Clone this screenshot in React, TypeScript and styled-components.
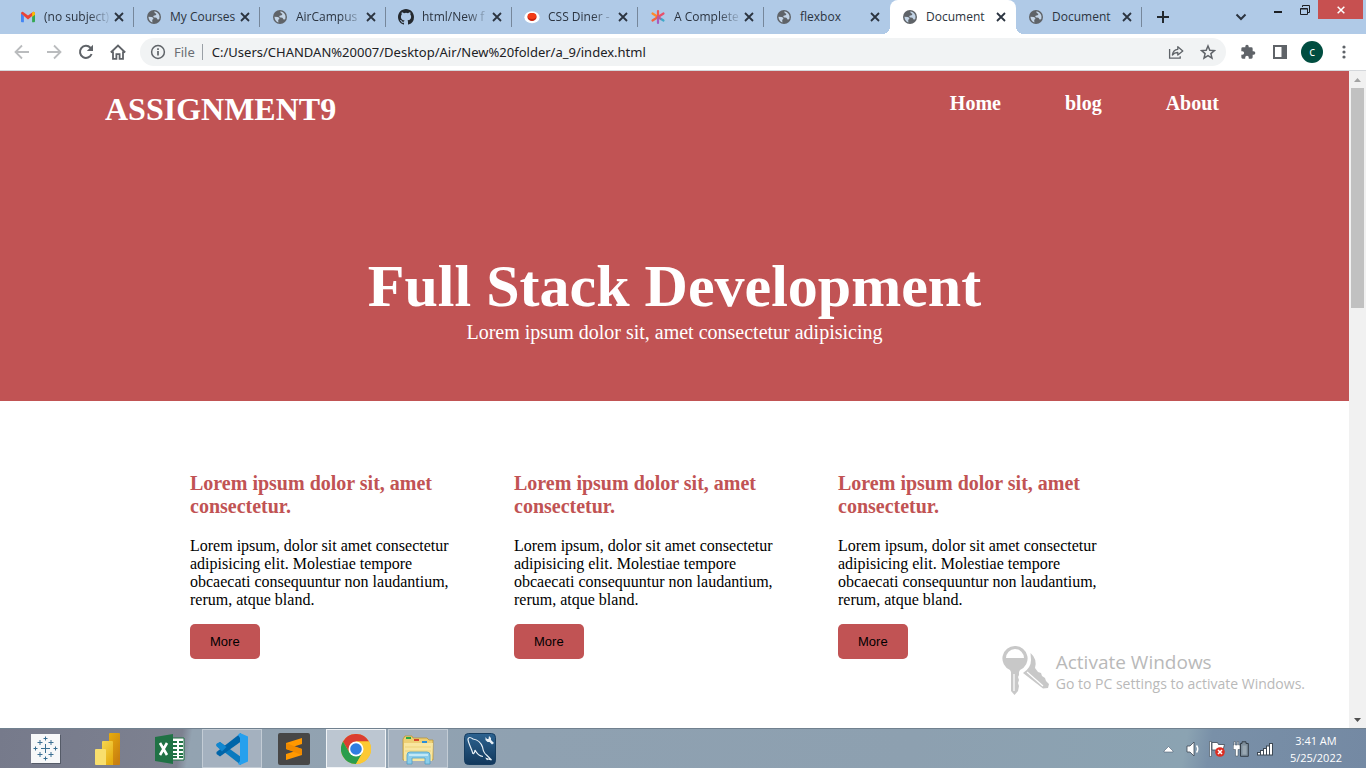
import React from "react";
import styled, { createGlobalStyle, css } from "styled-components";

const ui = `"Open Sans", "Noto Sans", sans-serif`;
const serif = `"Liberation Serif", "Times New Roman", serif`;
const red = "#c15354";

const Global = createGlobalStyle`
  * { box-sizing: border-box; }
  body { margin: 0; background: #fff; }
  h1, h2, h3, p { margin: 0; }
  button { border: 0; padding: 0; background: none; font: inherit; color: inherit; cursor: pointer; }
  a { color: inherit; text-decoration: none; }
  svg { display: block; flex: none; }
`;

const Screen = styled.div`
  display: flex;
  flex-direction: column;
  height: 100vh;
  overflow: hidden;
`;

/* ---------- tab strip ---------- */
const TabStrip = styled.header`
  display: flex;
  height: 34px;
  flex: none;
  padding-left: 8px;
  background: #b0cae7;
  font: 12px/16px ${ui};
  color: #2b3440;
`;
const Tabs = styled.div`
  display: flex;
  flex: 0 1 1134px;
  min-width: 0;
`;
const Tab = styled.div<{ $active?: boolean; $divider?: boolean }>`
  position: relative;
  display: flex;
  align-items: center;
  flex: 1 1 0;
  min-width: 0;
  gap: 8px;
  padding: 0 9px 0 12px;
  ${(p) =>
    p.$active &&
    css`
      background: #fff;
      border-radius: 8px 8px 0 0;
      &::before, &::after {
        content: "";
        position: absolute;
        bottom: 0;
        width: 8px;
        height: 8px;
      }
      &::before { right: 100%; background: radial-gradient(circle at 0 0, transparent 8px, #fff 8px); }
      &::after { left: 100%; background: radial-gradient(circle at 100% 0, transparent 8px, #fff 8px); }
    `}
  ${(p) =>
    p.$divider &&
    css`
      background: linear-gradient(#76879b, #76879b) right center / 1px 20px no-repeat;
    `}
`;
const TabTitle = styled.span<{ $fade?: boolean }>`
  flex: 1;
  min-width: 0;
  margin-right: -7px;
  white-space: nowrap;
  ${(p) => p.$fade && css`mask-image: linear-gradient(90deg, #000 65%, transparent);`}
`;
const IconButton = styled.button<{ $color?: string }>`
  display: flex;
  flex: none;
  color: ${(p) => p.$color ?? "#5f6368"};
`;
const NewTab = styled(IconButton)`
  && {
    align-items: center;
    padding-left: 15px;
  }
`;
const StripSpace = styled.div`flex: 1;`;
const WindowControls = styled.div`
  display: flex;
  align-items: flex-start;
  padding-right: 3px;
`;
const Control = styled.button<{ $w: number; $close?: boolean }>`
  && {
    display: flex;
    align-items: center;
    justify-content: center;
    width: ${(p) => p.$w}px;
    height: 19px;
    background: ${(p) => (p.$close ? "#c75050" : "none")};
    color: ${(p) => (p.$close ? "#fff" : "#1c1f24")};
  }
`;
const TabSearch = styled(IconButton)`
  && {
    align-self: center;
    padding-right: 18px;
  }
`;

/* ---------- toolbar ---------- */
const Toolbar = styled.div`
  display: flex;
  align-items: center;
  flex: none;
  height: 37px;
  padding: 0 20px 0 14px;
  gap: 16px;
  background: #fff;
  border-bottom: 1px solid #d5d8dc;
`;
const Omnibox = styled.div`
  display: flex;
  align-items: center;
  flex: 1;
  min-width: 0;
  height: 28px;
  margin: 0 -2px;
  padding: 0 10px;
  gap: 8px;
  border-radius: 14px;
  background: #f1f3f4;
  font: 13px/20px "Noto Sans", "Open Sans", sans-serif;
`;
const Scheme = styled.span`
  padding-right: 7px;
  border-right: 1px solid #9aa0a6;
  line-height: 16px;
  color: #6a6e73;
`;
const Address = styled.input`
  flex: 1;
  min-width: 0;
  border: 0;
  padding: 0 1px;
  outline: 0;
  background: none;
  font: inherit;
  color: #202124;
`;
const Actions = styled.div`
  display: flex;
  gap: 16px;
`;
const Avatar = styled.button`
  && {
    width: 22px;
    height: 22px;
    margin: 0 3px 0 -3px;
    border-radius: 50%;
    background: #004d40;
    color: #fff;
    font: 12px/20px ${ui};
  }
`;

/* ---------- page ---------- */
const Viewport = styled.div`
  position: relative;
  display: flex;
  flex: 1;
  min-height: 0;
`;
const Page = styled.main`
  flex: 1;
  min-width: 0;
  overflow: hidden;
  background: #fff;
  font: 16px/18px ${serif};
  color: #000;
`;
const Hero = styled.section`
  padding: 20px 130px 57px 105px;
  background: ${red};
  color: #fff;
`;
const Nav = styled.nav`
  display: flex;
  justify-content: space-between;
  align-items: flex-start;
`;
const Brand = styled.h1`
  font-size: 32px;
  line-height: 37px;
`;
const Links = styled.div`
  display: flex;
  gap: 64px;
  padding-top: 1px;
  font-size: 20px;
  font-weight: bold;
  line-height: 23px;
`;
const Banner = styled.div`
  margin: 124px -25px 0 0;
  text-align: center;
  font-size: 20px;
  line-height: 23px;
`;
const BannerTitle = styled.h2`
  padding-bottom: 1px;
  font-size: 60px;
  line-height: 68px;
`;
const Cards = styled.section`
  display: grid;
  grid-template-columns: repeat(3, 1fr);
  gap: 54px;
  padding: 71px 241px 71px 190px;
`;
const Card = styled.article`
  display: flex;
  flex-direction: column;
  align-items: flex-start;
`;
const CardTitle = styled.h3`
  margin-bottom: 19px;
  font-size: 20px;
  line-height: 23px;
  color: ${red};
`;
const More = styled.button`
  && {
    margin-top: 15px;
    padding: 10px 20px;
    border-radius: 5px;
    background: ${red};
    color: #000;
    font: 13px/15px "Liberation Sans", Arial, sans-serif;
  }
`;
const ScrollBar = styled.div`
  display: flex;
  flex-direction: column;
  flex: none;
  align-items: center;
  width: 17px;
  background: #f1f1f1;
`;
const ScrollArrow = styled.button`
  display: flex;
  align-items: center;
  justify-content: center;
  width: 17px;
  height: 17px;
`;
const ScrollTrack = styled.div`
  flex: 1;
  width: 13px;
`;
const ScrollThumb = styled.div`
  height: 220px;
  background: #c1c1c1;
`;
const Watermark = styled.aside`
  position: absolute;
  right: 61px;
  bottom: 32px;
  display: flex;
  gap: 6px;
  font: 14px/20px ${ui};
  color: #b9b9b9;
`;
const WatermarkTitle = styled.p`
  font-size: 19px;
  line-height: 24px;
`;
const WatermarkText = styled.div`padding-top: 4px;`;

/* ---------- taskbar ---------- */
const Taskbar = styled.footer`
  display: flex;
  flex: none;
  justify-content: space-between;
  height: 40px;
  padding: 0 24px 0 16px;
  border-top: 1px solid #71818f;
  background: linear-gradient(100deg, #767a8b 0, #7d8190 180px, #93a3b1 190px, #8fa1b1 520px, #8da0b0 900px, #8ba3b2 1170px, #7990a8 1195px, #7489a3 100%);
`;
const Apps = styled.div`
  display: flex;
  gap: 2px;
`;
const AppButton = styled.button<{ $state?: "open" | "active" }>`
  display: flex;
  align-items: center;
  justify-content: center;
  width: 60px;
  height: 39px;
  ${(p) =>
    p.$state === "open" &&
    css`&& { background: #a4b1bf; border: 1px solid #c3ccd5; }`}
  ${(p) =>
    p.$state === "active" &&
    css`&& { background: #bcc6d1; border: 1px solid #f0f3f6; }`}
`;
const Tray = styled.div`
  display: flex;
  align-items: center;
  gap: 8px;
  color: #fff;
`;
const Clock = styled.time`
  padding-left: 9px;
  font: 11px/17px ${ui};
  text-align: center;
`;

/* ---------- icons ---------- */
const Globe = () => (
  <svg width="16" height="16" viewBox="0 0 16 16">
    <circle cx="8" cy="8" r="7" fill="#5f6368" />
    <path d="M2.400 7.800 5.600 8q1.600.2 1.800 1.600.1 1-1.200 1.100l.2 2.700Q3 12.600 2.400 7.800zM8.400 2.300q-.2 1.700.8 2 1.600.3 1 1.500-.5.8-1.700.8-1.300.1-1.200 1.200.2.700 1.400.6 2-.1 2.300 1.200.1 1 1.100.9 1 .1 1.300-1Q14.400 4 8.400 2.300z" fill="#c3d4e6" />
  </svg>
);
const Gmail = () => (
  <svg width="16" height="16" viewBox="0 0 16 16">
    <path d="M1 4v8.300q0 .9.9.9h2V7z" fill="#4285f4" />
    <path d="M15 4v8.300q0 .9-.9.9h-2V7z" fill="#34a853" />
    <path d="M1 4.500Q1 2.600 2.800 2.800L8 6.600l5.200-3.800Q15 2.600 15 4.500L8 10.400z" fill="#ea4335" />
    <path d="M12.100 3.600 13.300 2.800Q15 2.600 15 4.400v1.300L12.100 8z" fill="#fbbc04" />
  </svg>
);
const GitHub = () => (
  <svg width="16" height="16" viewBox="0 0 16 16" fill="#24292f">
    <path d="M8 0C3.58 0 0 3.58 0 8c0 3.54 2.29 6.53 5.47 7.59.4.07.55-.17.55-.38 0-.19-.01-.82-.01-1.49-2.01.37-2.53-.49-2.69-.94-.09-.23-.48-.94-.82-1.13-.28-.15-.68-.52-.01-.53.63-.01 1.08.58 1.23.82.72 1.21 1.87.87 2.33.66.07-.52.28-.87.51-1.07-1.78-.2-3.64-.89-3.64-3.95 0-.87.31-1.59.82-2.15-.08-.2-.36-1.02.08-2.12 0 0 .67-.21 2.2.82a7.6 7.6 0 0 1 4 0c1.53-1.04 2.2-.82 2.2-.82.44 1.1.16 1.92.08 2.12.51.56.82 1.27.82 2.15 0 3.07-1.87 3.75-3.65 3.95.29.25.54.73.54 1.48 0 1.07-.01 1.93-.01 2.2 0 .21.15.46.55.38A8.01 8.01 0 0 0 16 8c0-4.42-3.58-8-8-8z" />
  </svg>
);
const Diner = () => (
  <svg width="16" height="16" viewBox="0 0 16 16">
    <ellipse cx="8" cy="8.3" rx="7.6" ry="6" fill="#fff" />
    <ellipse cx="8" cy="8" rx="4.6" ry="4" fill="#c6200d" />
    <ellipse cx="8" cy="7" rx="4.3" ry="3" fill="#f23b17" />
  </svg>
);
const Asterisk = () => (
  <svg width="16" height="16" viewBox="0 0 16 16" strokeWidth="2.200" strokeLinecap="round">
    <path d="M2.500 4.500 8 8" stroke="#ff8a2b" />
    <path d="M2.500 11.500 8 8" stroke="#f4633c" />
    <path d="M8 2v6" stroke="#ee5a52" />
    <path d="M8 8v6" stroke="#a65cc0" />
    <path d="m8 8 5.500-3.500" stroke="#e8506b" />
    <path d="m8 8 3 2" stroke="#b85a9a" />
    <path d="m11.500 10.300 2 1.200" stroke="#3fa9c9" />
  </svg>
);
const Cross = ({ size = 12 }: { size?: number }) => (
  <svg width={size} height={size} viewBox="0 0 12 12" stroke="currentColor" strokeWidth="1.800">
    <path d="m2 2 8 8M10 2 2 10" />
  </svg>
);
const Back = () => (
  <svg width="16" height="16" viewBox="0 0 16 16" fill="none" stroke="currentColor" strokeWidth="1.800">
    <path d="M15 8H2M8 1.500 1.500 8 8 14.500" />
  </svg>
);
const Forward = () => (
  <svg width="16" height="16" viewBox="0 0 16 16" fill="none" stroke="currentColor" strokeWidth="1.800">
    <path d="M1 8H14M8 1.500 14.500 8 8 14.500" />
  </svg>
);
const Reload = () => (
  <svg width="16" height="16" viewBox="0 0 16 16" fill="none" stroke="currentColor" strokeWidth="2">
    <path d="M13.600 10A6 6 0 1 1 12.400 3.800L14 5.400" />
    <path d="M15 .8V7H8.800z" fill="currentColor" stroke="none" />
  </svg>
);
const HomeIcon = () => (
  <svg width="16" height="16" viewBox="0 0 16 16" fill="none" stroke="currentColor" strokeWidth="1.800">
    <path d="M.8 8.500 8 1.600l7.200 6.900M3 7.500v7.300h3.400v-4.600h3.200v4.600H13V7.500" />
  </svg>
);
const Info = () => (
  <svg width="16" height="16" viewBox="0 0 16 16" fill="none" stroke="#5f6368" strokeWidth="1.500">
    <circle cx="8" cy="8" r="6.400" />
    <path d="M8 7v4.600M8 4.300v1.600" strokeWidth="1.700" />
  </svg>
);
const Share = () => (
  <svg width="16" height="16" viewBox="0 0 16 16" fill="none" stroke="currentColor" strokeWidth="1.300">
    <path d="M1.600 5v9.200h10.600v-2" />
    <path d="M4.400 11q.6-5.400 5.400-5.700V2.700L14.800 7 9.800 11V8.500Q6.300 8.400 4.400 11z" strokeLinejoin="round" />
  </svg>
);
const Star = () => (
  <svg width="16" height="16" viewBox="0 0 16 16" fill="none" stroke="currentColor" strokeWidth="1.500">
    <path d="m8 2 1.800 4.200 4.600.4-3.500 3 1.100 4.500L8 11.700 4 14.100l1.100-4.500-3.500-3 4.600-.4z" />
  </svg>
);
const Puzzle = () => (
  <svg width="16" height="16" viewBox="0 0 24 24" fill="currentColor">
    <path d="M20.500 11H19V7a2 2 0 0 0-2-2h-4V3.500a2.500 2.500 0 0 0-5 0V5H4a2 2 0 0 0-2 2v3.800h1.500a2.700 2.700 0 0 1 0 5.400H2V20a2 2 0 0 0 2 2h3.800v-1.500a2.700 2.700 0 0 1 5.400 0V22H17a2 2 0 0 0 2-2v-4h1.500a2.500 2.500 0 0 0 0-5z" />
  </svg>
);
const SidePanel = () => (
  <svg width="16" height="16" viewBox="0 0 16 16">
    <path d="M1 1h14v14H1zM3 3v10h6.500V3z" fill="currentColor" fillRule="evenodd" />
  </svg>
);
const Dots = () => (
  <svg width="4" height="16" viewBox="0 0 4 16" fill="currentColor">
    <circle cx="2" cy="3" r="1.600" /><circle cx="2" cy="8" r="1.600" /><circle cx="2" cy="13" r="1.600" />
  </svg>
);
const Keys = () => (
  <svg width="48" height="50" viewBox="0 0 48 50">
    <g fill="#c8c8c8">
      <path d="M28.500 7q7 6 4.500 15l3 4 3 1 1 3 3 2 1 3 3 3-1 4-5 .5L21 27q8-5 8-13z" />
      <path d="M25 26 41 40" stroke="#fff" strokeWidth="1.200" />
      <path d="M13 0a12.500 12.500 0 0 1 5 24l-1 2v3l-1 2 1 3-1 3 1 3-1 5-3.500 4L9 45V26l-1-2A12.500 12.500 0 0 1 13 0zM4 12h18a9 9 0 0 0-18 0z" fillRule="evenodd" />
      <path d="M12 28v17" stroke="#fff" strokeWidth="1.200" />
    </g>
  </svg>
);
const Tableau = () => (
  <svg width="32" height="32" viewBox="0 0 32 32">
    <path d="M2 2h29v29H2z" fill="#555b68" />
    <path d="M1 1h29v29H1z" fill="#f7f8f9" />
    <path d="M11 15.500h9M15.500 11v9M7.500 9.500h5M10 7v5M18.500 9.500h5M21 7v5M7.500 21.500h5M10 19v5M18.500 21.500h5M21 19v5M13.500 5.500h4M15.500 3.500v4M13.500 25.500h4M15.500 23.500v4M3.500 15.500h4M5.500 13.500v4M23.500 15.500h4M25.500 13.500v4" stroke="#3a6f92" />
  </svg>
);
const PowerBI = () => (
  <svg width="32" height="32" viewBox="0 0 32 32">
    <defs>
      <linearGradient id="pb" x2=".6" y2="1"><stop stopColor="#e8ad0c" /><stop offset="1" stopColor="#c87f10" /></linearGradient>
      <linearGradient id="pm" x2=".6" y2="1"><stop stopColor="#f6d751" /><stop offset="1" stopColor="#e6ad10" /></linearGradient>
    </defs>
    <rect x="17" y="0" width="11" height="32" rx="1" fill="url(#pb)" />
    <path d="M10 9q0-1 1-1h9q1 0 1 1v23H10z" fill="url(#pm)" />
    <path d="M3 17q0-1 1-1h9q1 0 1 1v15H4q-1 0-1-1z" fill="#f9df6d" />
  </svg>
);
const Excel = () => (
  <svg width="32" height="32" viewBox="0 0 32 32">
    <path d="M17 5h13v22H17z" fill="#fff" stroke="#207245" />
    <path d="M19 9h4M25 9h4M19 13h4M25 13h4M19 17h4M25 17h4M19 21h4M25 21h4M19 24h4M25 24h4" stroke="#207245" strokeWidth="2" />
    <path d="M1 4 19 1v30L1 28z" fill="#207245" />
    <path d="m6 10 7 12M13 10 6 22" stroke="#fff" strokeWidth="2.600" />
  </svg>
);
const VSCode = () => (
  <svg width="34" height="34" viewBox="0 0 34 34">
    <path d="M1.500 12 5 10 26 25v8L1.500 14z" fill="#0a7abf" />
    <path d="M1.500 22 5 24.500 26 9.500V1L1.500 20z" fill="#0065a9" />
    <path d="M1.500 12 5 10l6.500 5-4.500 4.500L1.500 14z" fill="#1187d0" />
    <path d="M25 1 33 4.500v25L25 33l-2-1 2-3V6l-2-3z" fill="#26a0ee" />
  </svg>
);
const Sublime = () => (
  <svg width="32" height="32" viewBox="0 0 32 32">
    <rect width="32" height="32" rx="2" fill="#474747" />
    <path d="m8 10 16-5v6l-8 2.600 8 2.400v6L8 27v-6l8-2.500L8 16z" fill="#ff9800" />
    <path d="m8 10 16 6v6L8 16z" fill="#f08a00" />
  </svg>
);
const Chrome = () => (
  <svg width="30" height="30" viewBox="0 0 30 30">
    <circle cx="15" cy="15" r="15" fill="#fbc116" />
    <path d="M2 7.500A15 15 0 0 1 28 7.500H15L8.500 18.800z" fill="#db3d31" />
    <path d="M2 7.500A15 15 0 0 0 15 30l6.500-11.200h-13z" fill="#2a9d4c" />
    <path d="M15 7.500h13A15 15 0 0 1 15 30l6.500-11.200z" fill="#fcc934" />
    <circle cx="15" cy="15" r="7.500" fill="#fff" />
    <circle cx="15" cy="15" r="5.800" fill="#2f7de1" />
  </svg>
);
const Explorer = () => (
  <svg width="32" height="32" viewBox="0 0 32 32">
    <path d="M1 6 3 3h7l1 2h14l2 2h4v20H1z" fill="#edcf74" stroke="#b98f2c" strokeWidth=".7" />
    <path d="M4 4h5v2H4z" fill="#29a847" /><path d="M12 6h5v2h-5z" fill="#d6452b" /><path d="M20 8h5v2h-5z" fill="#2b8ed8" />
    <path d="M2 10h29l-1 18H2z" fill="#f8e6a0" />
    <path d="M3 14h26M3 18h26" stroke="#ecd27a" />
    <path d="M5 31V22q0-3 3-3h17q3 0 3 3v9h-5v-6H10v6z" fill="#8bcdea" stroke="#4f9fc6" strokeWidth=".8" />
    <path d="M7 22h19" stroke="#d5f0fb" strokeWidth="1.500" />
  </svg>
);
const Workbench = () => (
  <svg width="32" height="32" viewBox="0 0 32 32">
    <defs><linearGradient id="wb" x2="0" y2="1"><stop stopColor="#2d6390" /><stop offset="1" stopColor="#12385c" /></linearGradient></defs>
    <rect x=".5" y=".5" width="31" height="31" rx="4" fill="url(#wb)" stroke="#163d60" />
    <path d="M9 21C8 16 4 10 4 6q1-3 5 0 7 1 9.500 8 1 6 4 8l5 5-5-1.500 1 1.500M9 21q2-1 2-4 3 6 8 6.500" fill="none" stroke="#e8f0f6" strokeWidth="1.200" />
    <path d="M21.500 4v3l2 2h2l2.500 2.500 2-1.500-3-3V5l-2-2-.5 3-1.500 0z" fill="#e8f0f6" />
  </svg>
);
const TrayUp = () => (
  <svg width="16" height="16" viewBox="-3 0 16 16"><path d="M0 10 4.500 5.500 9 10v1H0z" fill="#fff" stroke="#4f6073" strokeWidth=".6" /></svg>
);
const Speaker = () => (
  <svg width="16" height="16" viewBox="0 0 16 16">
    <path d="M2 5h3l4-4v14l-4-4H2z" fill="#fff" stroke="#3d4853" strokeWidth=".8" />
    <path d="M11.500 4.500q2.500 3.500 0 7" fill="none" stroke="#fff" strokeWidth="1.500" />
  </svg>
);
const Flag = () => (
  <svg width="16" height="16" viewBox="0 0 16 16">
    <path d="M.5.500h2v15h-2z" fill="#fff" stroke="#3d4853" strokeWidth=".6" />
    <path d="M3 1.500h5.500l1 2h6L13.500 11H9L8 9H3z" fill="#fff" stroke="#3d4853" strokeWidth=".8" />
    <circle cx="11" cy="11" r="4.800" fill="#dc2d22" />
    <path d="m9 9 4 4M13 9l-4 4" stroke="#fff" strokeWidth="1.500" />
  </svg>
);
const Battery = () => (
  <svg width="16" height="16" viewBox="0 0 16 16">
    <path d="M7.500 2.500H9V.8h4v1.700h2.300v12.800H7.500z" fill="#7f8f9c" stroke="#333d47" />
    <path d="M9.500 4.500h4v9h-4z" fill="#99a7b2" />
    <path d="M1 4V.5h1.300V4h2V.5h1.300V4H7v4.500H5V15H2.500V8.500H.3V4z" fill="#fff" stroke="#3d4853" strokeWidth=".5" />
  </svg>
);
const Signal = () => (
  <svg width="16" height="16" viewBox="0 0 16 16">
    <path d="M0 11h3V9h3V7h3V4.500h3V2h4v12.500H0z" fill="#3d4853" />
    <path d="M1 12h2v1.500H1zM4 10h2v3.500H4zM7 8h2v5.500H7zM10 5.500h2v8h-2zM13 3h2v10.500h-2z" fill="#fff" />
  </svg>
);

const tabs = [
  { title: "(no subject)", icon: <Gmail />, fade: true },
  { title: "My Courses", icon: <Globe /> },
  { title: "AirCampus", icon: <Globe />, fade: true },
  { title: "html/New f", icon: <GitHub />, fade: true },
  { title: "CSS Diner -", icon: <Diner />, fade: true },
  { title: "A Complete", icon: <Asterisk />, fade: true },
  { title: "flexbox", icon: <Globe />, plain: true },
  { title: "Document", icon: <Globe />, active: true },
  { title: "Document", icon: <Globe /> },
];

const apps: { name: string; icon: React.ReactNode; state?: "open" | "active" }[] = [
  { name: "Tableau", icon: <Tableau /> },
  { name: "Power BI", icon: <PowerBI /> },
  { name: "Excel", icon: <Excel /> },
  { name: "Visual Studio Code", icon: <VSCode />, state: "open" },
  { name: "Sublime Text", icon: <Sublime /> },
  { name: "Chrome", icon: <Chrome />, state: "active" },
  { name: "File Explorer", icon: <Explorer />, state: "open" },
  { name: "MySQL Workbench", icon: <Workbench /> },
];

const cards = [1, 2, 3];

export default function App() {
  return (
    <Screen>
      <Global />
      <TabStrip>
        <Tabs>
          {tabs.map((t, i) => (
            <Tab key={i} $active={t.active} $divider={!t.active && !t.plain}>
              {t.icon}
              <TabTitle $fade={t.fade}>{t.title}</TabTitle>
              <IconButton $color="#2b3440" aria-label="Close tab"><Cross /></IconButton>
            </Tab>
          ))}
        </Tabs>
        <NewTab $color="#23292f" aria-label="New tab">
          <svg width="12" height="12" viewBox="0 0 12 12" stroke="currentColor" strokeWidth="2"><path d="M6 0v12M0 6h12" /></svg>
        </NewTab>
        <StripSpace />
        <TabSearch $color="#2b3440" aria-label="Search tabs">
          <svg width="12" height="8" viewBox="0 0 12 8" fill="none" stroke="currentColor" strokeWidth="2"><path d="m1.500 1.500 4.500 4.500 4.500-4.500" /></svg>
        </TabSearch>
        <WindowControls>
          <Control $w={26} aria-label="Minimize">
            <svg width="8" height="8" viewBox="0 0 8 8"><path d="M0 5h8v2H0z" fill="currentColor" /></svg>
          </Control>
          <Control $w={27} aria-label="Restore">
            <svg width="10" height="10" viewBox="0 0 10 10" fill="none" stroke="currentColor"><path d="M2.500 2V.5h7v7H8" /><path d="M.5 3.500h7v6h-7zM.5 4h7" /></svg>
          </Control>
          <Control $w={45} $close aria-label="Close"><Cross size={10} /></Control>
        </WindowControls>
      </TabStrip>

      <Toolbar>
        <IconButton $color="#babcbe" aria-label="Back"><Back /></IconButton>
        <IconButton $color="#babcbe" aria-label="Forward"><Forward /></IconButton>
        <IconButton aria-label="Reload"><Reload /></IconButton>
        <IconButton aria-label="Home"><HomeIcon /></IconButton>
        <Omnibox>
          <Info />
          <Scheme>File</Scheme>
          <Address aria-label="Address" defaultValue="C:/Users/CHANDAN%20007/Desktop/Air/New%20folder/a_9/index.html" />
          <Actions>
            <IconButton aria-label="Share"><Share /></IconButton>
            <IconButton aria-label="Bookmark"><Star /></IconButton>
          </Actions>
        </Omnibox>
        <IconButton aria-label="Extensions"><Puzzle /></IconButton>
        <IconButton aria-label="Side panel"><SidePanel /></IconButton>
        <Avatar aria-label="Profile">c</Avatar>
        <IconButton aria-label="Menu"><Dots /></IconButton>
      </Toolbar>

      <Viewport>
        <Page>
          <Hero>
            <Nav>
              <Brand>ASSIGNMENT9</Brand>
              <Links>
                <a href="#home">Home</a>
                <a href="#blog">blog</a>
                <a href="#about">About</a>
              </Links>
            </Nav>
            <Banner>
              <BannerTitle>Full Stack Development</BannerTitle>
              <p>Lorem ipsum dolor sit, amet consectetur adipisicing</p>
            </Banner>
          </Hero>
          <Cards>
            {cards.map((c) => (
              <Card key={c}>
                <CardTitle>Lorem ipsum dolor sit, amet consectetur.</CardTitle>
                <p>Lorem ipsum, dolor sit amet consectetur adipisicing elit. Molestiae tempore obcaecati consequuntur non laudantium, rerum, atque bland.</p>
                <More>More</More>
              </Card>
            ))}
          </Cards>
        </Page>
        <ScrollBar>
          <ScrollArrow aria-label="Scroll up"><svg width="7" height="4" viewBox="0 0 7 4"><path d="M0 4 3.500 0 7 4z" fill="#a3a3a3" /></svg></ScrollArrow>
          <ScrollTrack><ScrollThumb /></ScrollTrack>
          <ScrollArrow aria-label="Scroll down"><svg width="7" height="4" viewBox="0 0 7 4"><path d="M0 0h7L3.500 4z" fill="#505050" /></svg></ScrollArrow>
        </ScrollBar>
        <Watermark>
          <Keys />
          <WatermarkText>
            <WatermarkTitle>Activate Windows</WatermarkTitle>
            <p>Go to PC settings to activate Windows.</p>
          </WatermarkText>
        </Watermark>
      </Viewport>

      <Taskbar>
        <Apps>
          {apps.map((a) => (
            <AppButton key={a.name} $state={a.state} aria-label={a.name}>{a.icon}</AppButton>
          ))}
        </Apps>
        <Tray>
          <TrayUp />
          <Speaker />
          <Flag />
          <Battery />
          <Signal />
          <Clock>3:41 AM<br />5/25/2022</Clock>
        </Tray>
      </Taskbar>
    </Screen>
  );
}
